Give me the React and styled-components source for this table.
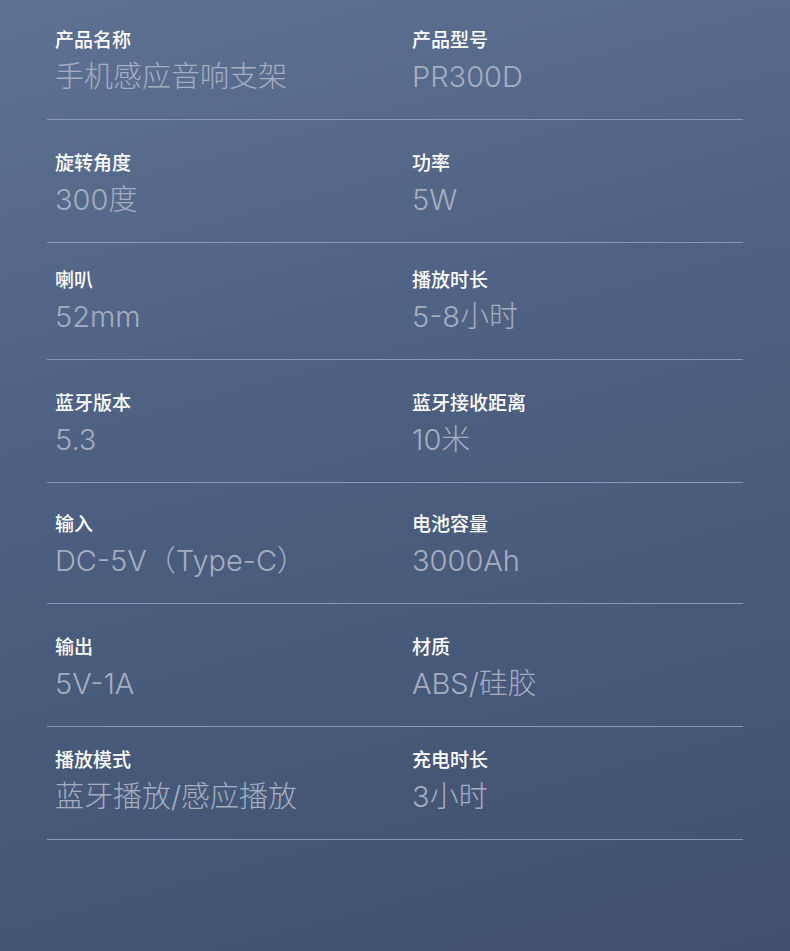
import React from "react";
import styled, { createGlobalStyle } from "styled-components";

const GlobalStyle = createGlobalStyle`
  html, body {
    margin: 0;
    padding: 0;
  }
  body {
    font-family: "Noto Sans CJK SC", "Noto Sans", sans-serif;
  }
`;

const Page = styled.div`
  width: 790px;
  height: 951px;
  box-sizing: border-box;
  padding: 0 47px;
  background: linear-gradient(165deg, #5d7193 0%, #4c5f80 45%, #41516f 100%);
  overflow: hidden;
`;

const Row = styled.div`
  display: grid;
  grid-template-columns: 357px 1fr;
  padding: ${(p) => p.top}px 8px 23px;
  border-bottom: 1px solid #8597bb;
`;

const Cell = styled.div`
  display: flex;
  flex-direction: column;
  gap: 7px;
`;

const Label = styled.div`
  font-size: 19px;
  line-height: 24px;
  font-weight: 500;
  color: #ffffff;
`;

const Value = styled.div`
  font-family: "Inter", "Noto Sans CJK SC", sans-serif;
  font-size: 29px;
  line-height: 38px;
  font-weight: 300;
  color: #a5aec1;
  white-space: nowrap;
`;

const rows = [
  { top: 27, items: [["产品名称", "手机感应音响支架"], ["产品型号", "PR300D"]] },
  { top: 30, items: [["旋转角度", "300度"], ["功率", "5W"]] },
  { top: 24, items: [["喇叭", "52mm"], ["播放时长", "5-8小时"]] },
  { top: 30, items: [["蓝牙版本", "5.3"], ["蓝牙接收距离", "10米"]] },
  { top: 28, items: [["输入", "DC-5V（Type-C）"], ["电池容量", "3000Ah"]] },
  { top: 30, items: [["输出", "5V-1A"], ["材质", "ABS/硅胶"]] },
  { top: 20, items: [["播放模式", "蓝牙播放/感应播放"], ["充电时长", "3小时"]] },
];

export default function App() {
  return (
    <>
      <GlobalStyle />
      <Page>
        {rows.map((row, i) => (
          <Row key={i} top={row.top}>
            {row.items.map(([label, value]) => (
              <Cell key={label}>
                <Label>{label}</Label>
                <Value>{value}</Value>
              </Cell>
            ))}
          </Row>
        ))}
      </Page>
    </>
  );
}
